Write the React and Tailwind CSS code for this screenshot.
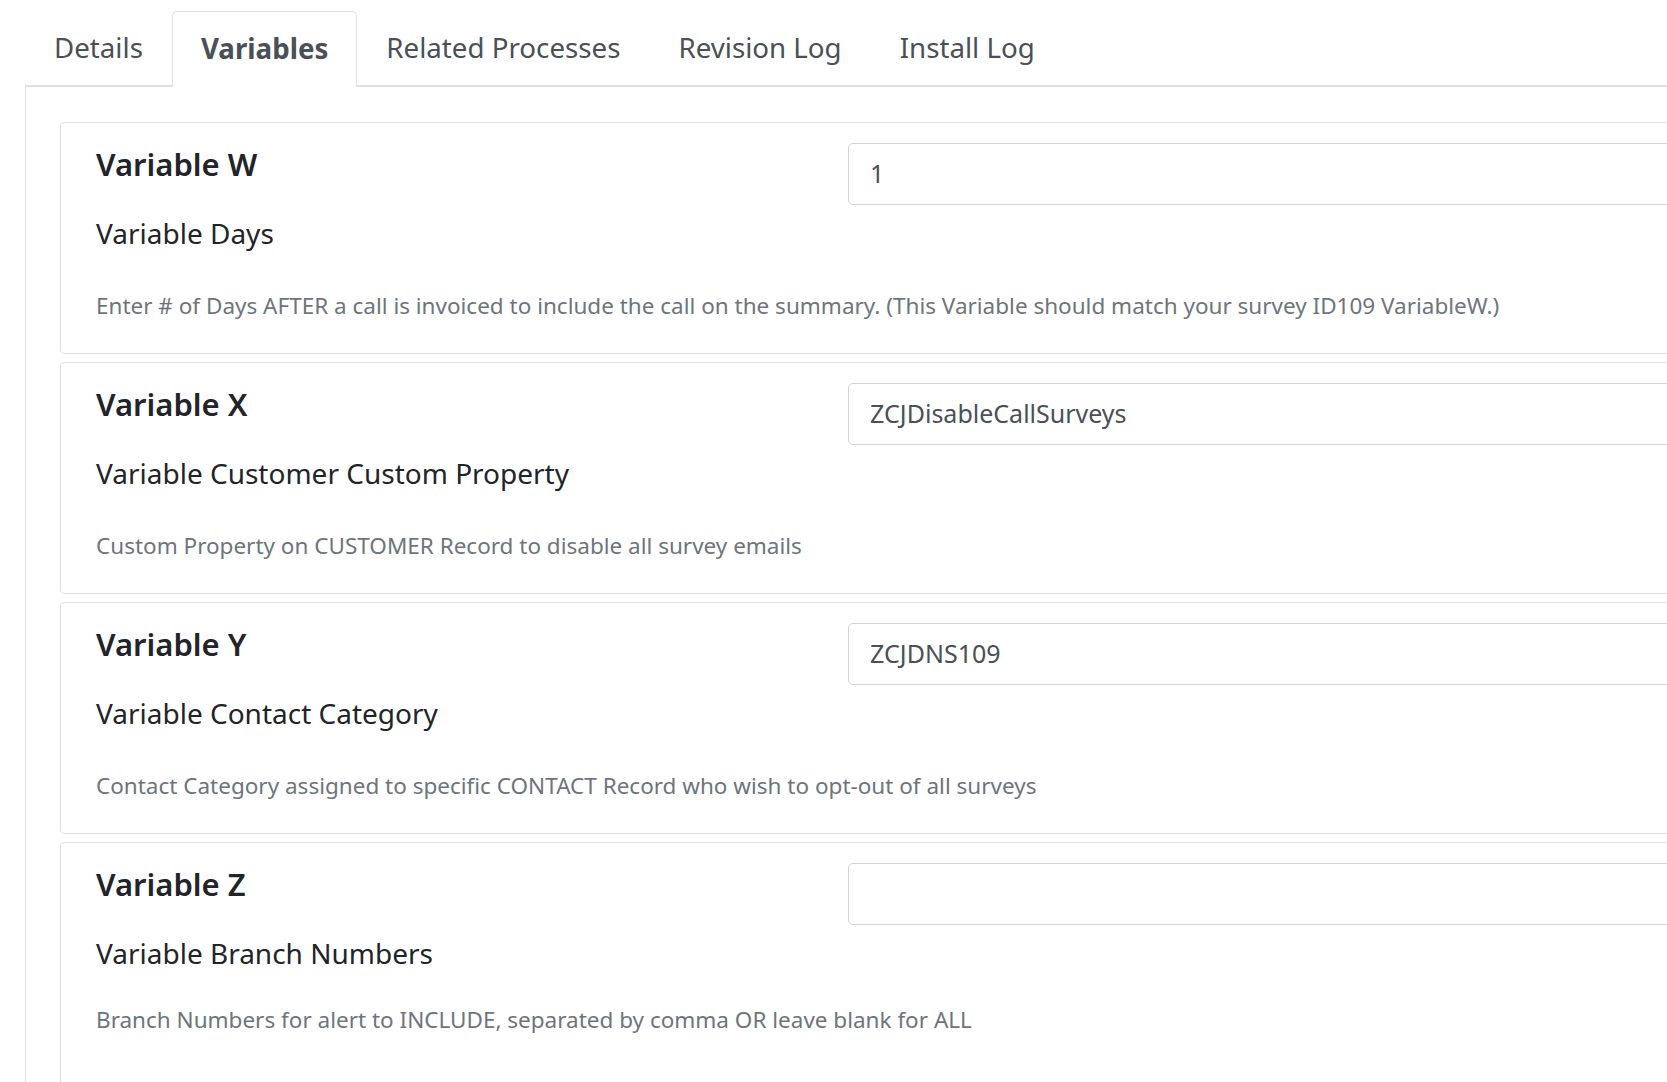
import React from 'react';

const tabs = ['Details', 'Variables', 'Related Processes', 'Revision Log', 'Install Log'];

const variables = [
  {
    title: 'Variable W',
    label: 'Variable Days',
    value: '1',
    help: 'Enter # of Days AFTER a call is invoiced to include the call on the summary. (This Variable should match your survey ID109 VariableW.)'
  },
  {
    title: 'Variable X',
    label: 'Variable Customer Custom Property',
    value: 'ZCJDisableCallSurveys',
    help: 'Custom Property on CUSTOMER Record to disable all survey emails'
  },
  {
    title: 'Variable Y',
    label: 'Variable Contact Category',
    value: 'ZCJDNS109',
    help: 'Contact Category assigned to specific CONTACT Record who wish to opt-out of all surveys'
  },
  {
    title: 'Variable Z',
    label: 'Variable Branch Numbers',
    value: '',
    help: 'Branch Numbers for alert to INCLUDE, separated by comma OR leave blank for ALL'
  }
];

const VariableCard = ({ item, last }) => {
  return (
    <div
      className={`${last ? 'h-[300px]' : 'h-[232px]'} w-[1700px] shrink-0 rounded-[4px] border border-[#dfdfdf] px-[35px] pt-[20px]`}
    >
      <div className="flex">
        <div className="w-[752px] shrink-0">
          <h5 className="mt-[2px] text-[31px] font-semibold leading-[38px] text-[#212529]">{item.title}</h5>
          <div className="mt-[32px] text-[28px] leading-[36px] text-[#212529]">{item.label}</div>
        </div>
        <div className="flex h-[62px] flex-1 items-center rounded-[5px] border border-[#ced4da] bg-white px-[21px] text-[25px] text-[#495057]">
          {item.value}
        </div>
      </div>
      <p
        className={`${last ? 'mt-[31px]' : 'mt-[37px]'} whitespace-nowrap text-[22.5px] leading-[36px] text-[#6c757d]`}
      >
        {item.help}
      </p>
    </div>
  );
};

export default function App() {
  return (
    <div
      className="flex h-[1082px] w-[1667px] flex-col overflow-hidden bg-white"
      style={{ fontFamily: '"Noto Sans", "Open Sans", sans-serif' }}
    >
      <ul className="ml-[25px] mt-[11px] flex shrink-0 border-b-2 border-[#dee2e6]">
        {tabs.map((tab) => {
          const active = tab === 'Variables';
          return (
            <li
              key={tab}
              className={
                active
                  ? '-mb-[2px] flex h-[76px] items-center rounded-t-[5px] border border-b-0 border-[#dee2e6] bg-white px-[28px] pb-[2px] text-[27.7px] font-bold text-[#495057]'
                  : 'flex h-[74px] items-center border border-transparent px-[28px] text-[27.7px] text-[#495057]'
              }
            >
              {tab}
            </li>
          );
        })}
      </ul>
      <div className="ml-[25px] flex flex-1 flex-col gap-[8px] border-l border-[#dee2e6] pl-[34px] pt-[35px]">
        {variables.map((item, i) => (
          <VariableCard key={item.title} item={item} last={i === variables.length - 1} />
        ))}
      </div>
    </div>
  );
}
